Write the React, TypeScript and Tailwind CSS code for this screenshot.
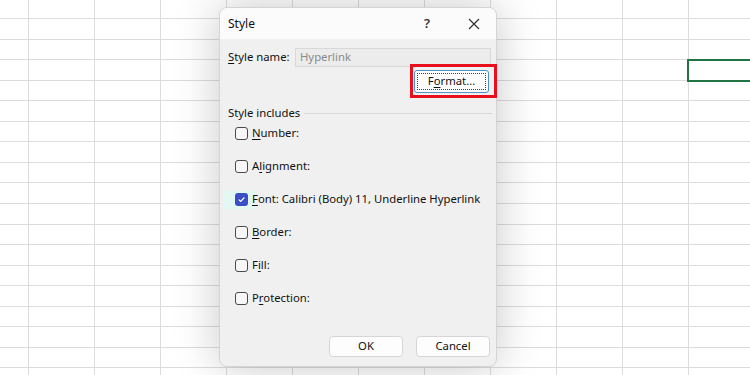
import React from "react";

const font = { fontFamily: '"Noto Sans", "Open Sans", Arial, sans-serif' };

function Grid() {
  const lines: number[] = [];
  for (let k = 0; k < 19; k++) lines.push(Math.round(19 + 20.55 * k));
  const heights: number[] = [19];
  for (let i = 1; i < lines.length; i++) heights.push(lines[i] - lines[i - 1]);
  const cols = [29, 66, 66, 66, 66, 66, 66, 66, 66, 66, 66, 66];
  return (
    <div className="flex flex-col w-[750px] h-[375px] overflow-hidden bg-white">
      {heights.map((h, r) => (
        <div key={r} className="flex shrink-0 border-b border-[#dcdcdc]" style={{ height: h }}>
          {cols.map((w, c) => (
            <div key={c} className="shrink-0 h-full border-r border-[#dcdcdc]" style={{ width: w }} />
          ))}
        </div>
      ))}
    </div>
  );
}

function Check({ label, u, rest, checked }: { label: string; u: string; rest: string; checked?: boolean }) {
  return (
    <div className="relative flex items-center h-[33px]">
      {checked && <div className="absolute left-[-4px] top-[8px] w-[32px] h-[18px] bg-[#e3f7f3]" />}
      <div
        className={
          "relative ml-[7px] w-[13px] h-[13px] rounded-[3px] flex items-center justify-center " +
          (checked ? "bg-[#3a4fc6]" : "border border-[#4a4a4a] bg-[#f7f7f7]")
        }
      >
        {checked && (
          <svg width="9" height="9" viewBox="0 0 10 10">
            <path d="M2 5.2 L4.1 7.2 L8.2 2.8" fill="none" stroke="white" strokeWidth="1.3" />
          </svg>
        )}
      </div>
      <span className="relative ml-[4px] text-[11.3px] text-[#111] whitespace-nowrap">
        {label}
        <span className="underline underline-offset-2">{u}</span>
        {rest}
      </span>
    </div>
  );
}

export default function App() {
  return (
    <div className="relative w-[750px] h-[375px] overflow-hidden" style={font}>
      <Grid />
      <div className="absolute left-[687px] top-[59px] w-[70px] h-[23px] border-2 border-[#217346]" />

      <div className="absolute left-[219px] top-[7px] w-[278px] h-[360px] rounded-[8px] bg-[#f0f0f0] border border-[#d4d4d4] shadow-[0_0_45px_rgba(0,0,0,0.22)] flex flex-col overflow-hidden">
        {/* title bar */}
        <div className="h-[31px] shrink-0 bg-[#fbfbfb] flex items-center pl-[8px] pr-[14px]">
          <span className="text-[12px] text-[#111] flex-1">Style</span>
          <span className="text-[13px] font-semibold text-[#333] mr-[38px]">?</span>
          <svg width="12" height="12" viewBox="0 0 12 12" className="mr-[2px]">
            <path d="M1 1 L11 11 M11 1 L1 11" stroke="#333" strokeWidth="1.2" />
          </svg>
        </div>

        <div className="flex flex-col pl-[8px] pr-[5px] pt-[9px]">
          <div className="flex items-center h-[19px]">
            <span className="text-[11.3px] text-[#111] w-[67px]">
              <span className="underline underline-offset-2">S</span>tyle name:
            </span>
            <div className="flex-1 h-[19px] border border-[#d8d8d8] bg-[#ececec] flex items-center pl-[4px]">
              <span className="text-[11.3px] text-[#8a8a8a]">Hyperlink</span>
            </div>
          </div>

          <div className="flex justify-end pr-[2px] mt-[3px]">
            <div className="w-[75px] h-[23px] rounded-[3px] border border-[#4a90c8] bg-white p-[2px]">
              <div className="w-full h-full border border-dotted border-[#444] flex items-center justify-center text-[11.3px] text-[#111]">
                F<span className="underline underline-offset-2">o</span>rmat...
              </div>
            </div>
          </div>

          <div className="flex items-center mt-[12px] h-[16px]">
            <span className="text-[11.3px] text-[#111] whitespace-nowrap">Style includes</span>
            <div className="flex-1 h-px bg-[#d8d8d8] ml-[4px] mr-[-1px]" />
          </div>

          <div className="flex flex-col mt-[-4px]">
            <Check label="" u="N" rest="umber:" />
            <Check label="A" u="l" rest="ignment:" />
            <Check label="" u="F" rest="ont: Calibri (Body) 11, Underline Hyperlink" checked />
            <Check label="" u="B" rest="order:" />
            <Check label="F" u="i" rest="ll:" />
            <Check label="P" u="r" rest="otection:" />
          </div>
        </div>

        <div className="flex justify-end gap-[13px] pr-[6px] mt-auto mb-[9px]">
          <div className="w-[74px] h-[21px] rounded-[4px] bg-[#fdfdfd] border border-[#d6d6d6] flex items-center justify-center text-[11.3px] text-[#111]">
            OK
          </div>
          <div className="w-[74px] h-[21px] rounded-[4px] bg-[#fdfdfd] border border-[#d6d6d6] flex items-center justify-center text-[11.3px] text-[#111]">
            Cancel
          </div>
        </div>
      </div>

      <div className="absolute left-[410px] top-[64px] w-[87px] h-[34px] border-[3px] border-[#e8101c]" />
    </div>
  );
}
